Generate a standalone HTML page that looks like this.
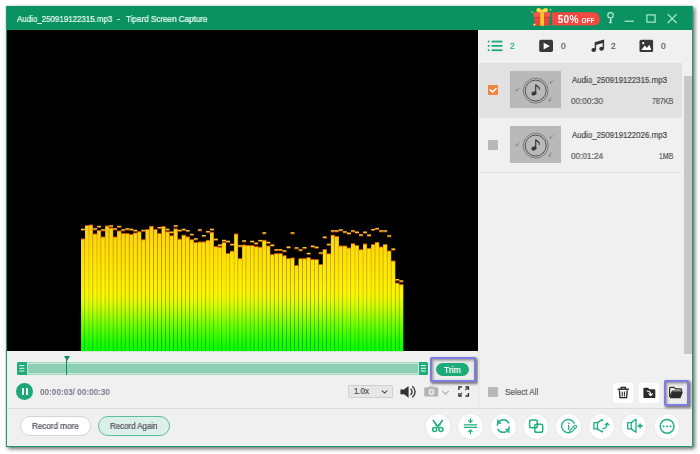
<!DOCTYPE html>
<html lang="en">
<head>
<meta charset="utf-8">
<title>Tipard Screen Capture</title>
<style>
*{box-sizing:border-box;margin:0;padding:0}
html,body{width:700px;height:454px;overflow:hidden;background:#fff}
body{font-family:"Liberation Sans",sans-serif;position:relative;color:#444}
.abs{position:absolute}
#win{position:absolute;left:6px;top:6.3px;width:687.1px;height:440.7px;background:#f0f0f0;box-shadow:2px 2px 4px rgba(0,0,0,.55), 0 0 2px rgba(0,0,0,.15)}
#winborder{position:absolute;left:6px;top:6.3px;width:687.1px;height:440.7px;border:1px solid #1a9a6e;border-right-width:1.5px;border-bottom-width:1.3px;border-top:none;pointer-events:none}
#title{position:absolute;left:6px;top:6.3px;width:687.1px;height:23.3px;background:#0a9263}
#title .t{position:absolute;left:17px;top:0;height:24px;line-height:25px;font-size:8.2px;color:#eafaf2;white-space:pre;left:10.8px}
.ls{letter-spacing:-.13px}
#video{position:absolute;left:7px;top:29.5px;width:471px;height:321.6px;background:#000}
#spec{position:absolute;left:0;top:0}
.txt{position:absolute;white-space:pre;line-height:1;transform-origin:0 0;will-change:transform;-webkit-text-stroke:.22px}
#side{position:absolute;left:478px;top:29.5px;width:214px;height:378px;background:#f0f0f0}
.row1{position:absolute;left:479px;top:62.5px;width:202.5px;height:55px;background:#e1e1e1}
.row2line{position:absolute;left:479px;top:171.5px;width:202.5px;height:1px;background:#e2e2e2}
.thumb{position:absolute;width:50.5px;height:37.2px;background:#b9b9b9}
.cb{position:absolute;width:10.2px;height:10.2px;border-radius:1px;background:#b8b8b8}
.sep{position:absolute;left:7px;top:407.6px;width:685px;height:1px;background:#dcdcdc}
.circ{position:absolute;top:413.8px;width:24.8px;height:24.8px;border-radius:50%;background:#fff;box-shadow:0 0 1.5px rgba(0,0,0,.12)}
.sq{position:absolute;top:382.6px;width:20.2px;height:20.2px;border-radius:3px;background:#fff}
.pill{position:absolute;top:416.4px;height:20px;border-radius:10px;font-size:8px;line-height:19px;text-align:center;color:#4a4a55}
.hl{position:absolute;border:2.9px solid #7c7ce2;border-radius:1.5px;box-shadow:1.2px 1.6px 2.6px rgba(0,0,0,.5), inset 1.2px 1.6px 2.6px rgba(0,0,0,.38)}
#tm{-webkit-text-stroke:0}
</style>
</head>
<body>
<div id="win"></div>

<!-- title bar -->
<div id="title">
</div>

<!-- video area -->
<div id="video"></div>
<svg id="spec" width="700" height="454" viewBox="0 0 700 454" shape-rendering="auto">
<defs>
<linearGradient id="gb" gradientUnits="userSpaceOnUse" x1="0" y1="222" x2="0" y2="351">
<stop offset="0" stop-color="#ffc81c"/><stop offset="0.12" stop-color="#ffd80e"/><stop offset="0.3" stop-color="#ffe404"/><stop offset="0.5" stop-color="#fff000"/><stop offset="0.58" stop-color="#f6f800"/><stop offset="0.67" stop-color="#c8fc00"/><stop offset="0.8" stop-color="#6cff00"/><stop offset="0.93" stop-color="#1cff00"/><stop offset="1" stop-color="#08ff00"/>
</linearGradient>
<linearGradient id="gd" gradientUnits="userSpaceOnUse" x1="0" y1="222" x2="0" y2="351">
<stop offset="0" stop-color="#a85800"/><stop offset="0.3" stop-color="#a87c00"/><stop offset="0.55" stop-color="#9c9800"/><stop offset="0.8" stop-color="#389c00"/><stop offset="1" stop-color="#069000"/>
</linearGradient>
<linearGradient id="gl" gradientUnits="userSpaceOnUse" x1="0" y1="222" x2="0" y2="351">
<stop offset="0" stop-color="#e09408"/><stop offset="0.3" stop-color="#e0b800"/><stop offset="0.55" stop-color="#d8d000"/><stop offset="0.8" stop-color="#54d400"/><stop offset="1" stop-color="#0ccc00"/>
</linearGradient>
</defs>
<rect x="81.00" y="239.0" width="4.03" height="112.1" fill="url(#gd)"/>
<rect x="85.03" y="225.5" width="4.03" height="125.6" fill="url(#gl)"/>
<rect x="89.06" y="225.0" width="4.03" height="126.1" fill="url(#gd)"/>
<rect x="93.09" y="234.0" width="4.03" height="117.1" fill="url(#gl)"/>
<rect x="97.12" y="230.6" width="4.03" height="120.5" fill="url(#gd)"/>
<rect x="101.15" y="237.0" width="4.03" height="114.1" fill="url(#gl)"/>
<rect x="105.18" y="226.0" width="4.03" height="125.1" fill="url(#gd)"/>
<rect x="109.21" y="228.0" width="4.03" height="123.1" fill="url(#gl)"/>
<rect x="113.24" y="237.0" width="4.03" height="114.1" fill="url(#gd)"/>
<rect x="117.27" y="231.0" width="4.03" height="120.1" fill="url(#gl)"/>
<rect x="121.30" y="233.5" width="4.03" height="117.6" fill="url(#gd)"/>
<rect x="125.33" y="233.5" width="4.03" height="117.6" fill="url(#gl)"/>
<rect x="129.36" y="234.6" width="4.03" height="116.5" fill="url(#gd)"/>
<rect x="133.39" y="233.0" width="4.03" height="118.1" fill="url(#gl)"/>
<rect x="137.42" y="231.8" width="4.03" height="119.3" fill="url(#gd)"/>
<rect x="141.45" y="239.8" width="4.03" height="111.3" fill="url(#gl)"/>
<rect x="145.48" y="229.5" width="4.03" height="121.6" fill="url(#gd)"/>
<rect x="149.51" y="226.3" width="4.03" height="124.8" fill="url(#gl)"/>
<rect x="153.54" y="229.5" width="4.03" height="121.6" fill="url(#gd)"/>
<rect x="157.57" y="233.5" width="4.03" height="117.6" fill="url(#gl)"/>
<rect x="161.60" y="226.6" width="4.03" height="124.5" fill="url(#gd)"/>
<rect x="165.63" y="231.8" width="4.03" height="119.3" fill="url(#gl)"/>
<rect x="169.66" y="235.8" width="4.03" height="115.3" fill="url(#gd)"/>
<rect x="173.69" y="228.9" width="4.03" height="122.2" fill="url(#gl)"/>
<rect x="177.72" y="239.2" width="4.03" height="111.9" fill="url(#gd)"/>
<rect x="181.75" y="235.2" width="4.03" height="115.9" fill="url(#gl)"/>
<rect x="185.78" y="236.9" width="4.03" height="114.2" fill="url(#gd)"/>
<rect x="189.81" y="239.8" width="4.03" height="111.3" fill="url(#gl)"/>
<rect x="193.84" y="242.6" width="4.03" height="108.5" fill="url(#gd)"/>
<rect x="197.87" y="242.0" width="4.03" height="109.1" fill="url(#gl)"/>
<rect x="201.90" y="242.0" width="4.03" height="109.1" fill="url(#gd)"/>
<rect x="205.93" y="240.3" width="4.03" height="110.8" fill="url(#gl)"/>
<rect x="209.96" y="232.3" width="4.03" height="118.8" fill="url(#gd)"/>
<rect x="213.99" y="246.7" width="4.03" height="104.4" fill="url(#gl)"/>
<rect x="218.02" y="247.2" width="4.03" height="103.9" fill="url(#gd)"/>
<rect x="222.05" y="242.6" width="4.03" height="108.5" fill="url(#gl)"/>
<rect x="226.08" y="253.5" width="4.03" height="97.6" fill="url(#gd)"/>
<rect x="230.11" y="251.2" width="4.03" height="99.9" fill="url(#gl)"/>
<rect x="234.14" y="234.0" width="4.03" height="117.1" fill="url(#gd)"/>
<rect x="238.17" y="258.7" width="4.03" height="92.4" fill="url(#gl)"/>
<rect x="242.20" y="245.0" width="4.03" height="106.1" fill="url(#gd)"/>
<rect x="246.23" y="245.5" width="4.03" height="105.6" fill="url(#gl)"/>
<rect x="250.26" y="245.5" width="4.03" height="105.6" fill="url(#gd)"/>
<rect x="254.29" y="246.7" width="4.03" height="104.4" fill="url(#gl)"/>
<rect x="258.32" y="247.2" width="4.03" height="103.9" fill="url(#gd)"/>
<rect x="262.35" y="240.3" width="4.03" height="110.8" fill="url(#gl)"/>
<rect x="266.38" y="246.0" width="4.03" height="105.1" fill="url(#gd)"/>
<rect x="270.41" y="254.7" width="4.03" height="96.4" fill="url(#gl)"/>
<rect x="274.44" y="253.5" width="4.03" height="97.6" fill="url(#gd)"/>
<rect x="278.47" y="253.5" width="4.03" height="97.6" fill="url(#gl)"/>
<rect x="282.50" y="255.8" width="4.03" height="95.3" fill="url(#gd)"/>
<rect x="286.53" y="258.7" width="4.03" height="92.4" fill="url(#gl)"/>
<rect x="290.56" y="258.0" width="4.03" height="93.1" fill="url(#gd)"/>
<rect x="294.59" y="265.6" width="4.03" height="85.5" fill="url(#gl)"/>
<rect x="298.62" y="258.7" width="4.03" height="92.4" fill="url(#gd)"/>
<rect x="302.65" y="258.7" width="4.03" height="92.4" fill="url(#gl)"/>
<rect x="306.68" y="257.5" width="4.03" height="93.6" fill="url(#gd)"/>
<rect x="310.71" y="259.6" width="4.03" height="91.5" fill="url(#gl)"/>
<rect x="314.74" y="259.6" width="4.03" height="91.5" fill="url(#gd)"/>
<rect x="318.77" y="264.6" width="4.03" height="86.5" fill="url(#gl)"/>
<rect x="322.80" y="249.5" width="4.03" height="101.6" fill="url(#gd)"/>
<rect x="326.83" y="253.8" width="4.03" height="97.3" fill="url(#gl)"/>
<rect x="330.86" y="235.2" width="4.03" height="115.9" fill="url(#gd)"/>
<rect x="334.89" y="236.6" width="4.03" height="114.5" fill="url(#gl)"/>
<rect x="338.92" y="246.0" width="4.03" height="105.1" fill="url(#gd)"/>
<rect x="342.95" y="246.0" width="4.03" height="105.1" fill="url(#gl)"/>
<rect x="346.98" y="248.0" width="4.03" height="103.1" fill="url(#gd)"/>
<rect x="351.01" y="243.8" width="4.03" height="107.3" fill="url(#gl)"/>
<rect x="355.04" y="245.5" width="4.03" height="105.6" fill="url(#gd)"/>
<rect x="359.07" y="249.8" width="4.03" height="101.3" fill="url(#gl)"/>
<rect x="363.10" y="244.0" width="4.03" height="107.1" fill="url(#gd)"/>
<rect x="367.13" y="248.4" width="4.03" height="102.7" fill="url(#gl)"/>
<rect x="371.16" y="244.5" width="4.03" height="106.6" fill="url(#gd)"/>
<rect x="375.19" y="242.4" width="4.03" height="108.7" fill="url(#gl)"/>
<rect x="379.22" y="247.0" width="4.03" height="104.1" fill="url(#gd)"/>
<rect x="383.25" y="244.5" width="4.03" height="106.6" fill="url(#gl)"/>
<rect x="387.28" y="251.0" width="4.03" height="100.1" fill="url(#gd)"/>
<rect x="391.31" y="261.0" width="4.03" height="90.1" fill="url(#gl)"/>
<rect x="395.34" y="283.1" width="4.03" height="68.0" fill="url(#gd)"/>
<rect x="399.37" y="284.7" width="4.03" height="66.4" fill="url(#gl)"/>
<rect x="81.10" y="239.0" width="3.4" height="112.1" fill="url(#gb)"/>
<rect x="81.00" y="238.5" width="3.9" height="0.9" fill="#d84a00"/>
<rect x="81.00" y="228.7" width="3.9" height="1.6" fill="#ffc62e"/>
<rect x="81.00" y="230.3" width="3.9" height="0.6" fill="#c03800"/>
<rect x="85.13" y="225.5" width="3.4" height="125.6" fill="url(#gb)"/>
<rect x="85.03" y="225.0" width="3.9" height="0.9" fill="#d84a00"/>
<rect x="89.16" y="225.0" width="3.4" height="126.1" fill="url(#gb)"/>
<rect x="89.06" y="224.5" width="3.9" height="0.9" fill="#d84a00"/>
<rect x="93.19" y="234.0" width="3.4" height="117.1" fill="url(#gb)"/>
<rect x="93.09" y="233.5" width="3.9" height="0.9" fill="#d84a00"/>
<rect x="93.09" y="228.2" width="3.9" height="1.6" fill="#ffc62e"/>
<rect x="93.09" y="229.8" width="3.9" height="0.6" fill="#c03800"/>
<rect x="97.22" y="230.6" width="3.4" height="120.5" fill="url(#gb)"/>
<rect x="97.12" y="230.1" width="3.9" height="0.9" fill="#d84a00"/>
<rect x="97.12" y="225.8" width="3.9" height="1.6" fill="#ffc62e"/>
<rect x="97.12" y="227.4" width="3.9" height="0.6" fill="#c03800"/>
<rect x="101.25" y="237.0" width="3.4" height="114.1" fill="url(#gb)"/>
<rect x="101.15" y="236.5" width="3.9" height="0.9" fill="#d84a00"/>
<rect x="101.15" y="229.2" width="3.9" height="1.6" fill="#ffc62e"/>
<rect x="101.15" y="230.8" width="3.9" height="0.6" fill="#c03800"/>
<rect x="105.28" y="226.0" width="3.4" height="125.1" fill="url(#gb)"/>
<rect x="105.18" y="225.5" width="3.9" height="0.9" fill="#d84a00"/>
<rect x="109.31" y="228.0" width="3.4" height="123.1" fill="url(#gb)"/>
<rect x="109.21" y="227.5" width="3.9" height="0.9" fill="#d84a00"/>
<rect x="109.21" y="225.2" width="3.9" height="1.6" fill="#ffc62e"/>
<rect x="109.21" y="226.8" width="3.9" height="0.6" fill="#c03800"/>
<rect x="113.34" y="237.0" width="3.4" height="114.1" fill="url(#gb)"/>
<rect x="113.24" y="236.5" width="3.9" height="0.9" fill="#d84a00"/>
<rect x="113.24" y="228.2" width="3.9" height="1.6" fill="#ffc62e"/>
<rect x="113.24" y="229.8" width="3.9" height="0.6" fill="#c03800"/>
<rect x="117.37" y="231.0" width="3.4" height="120.1" fill="url(#gb)"/>
<rect x="117.27" y="230.5" width="3.9" height="0.9" fill="#d84a00"/>
<rect x="117.27" y="225.8" width="3.9" height="1.6" fill="#ffc62e"/>
<rect x="117.27" y="227.4" width="3.9" height="0.6" fill="#c03800"/>
<rect x="121.40" y="233.5" width="3.4" height="117.6" fill="url(#gb)"/>
<rect x="121.30" y="233.0" width="3.9" height="0.9" fill="#d84a00"/>
<rect x="121.30" y="229.2" width="3.9" height="1.6" fill="#ffc62e"/>
<rect x="121.30" y="230.8" width="3.9" height="0.6" fill="#c03800"/>
<rect x="125.43" y="233.5" width="3.4" height="117.6" fill="url(#gb)"/>
<rect x="125.33" y="233.0" width="3.9" height="0.9" fill="#d84a00"/>
<rect x="125.33" y="228.2" width="3.9" height="1.6" fill="#ffc62e"/>
<rect x="125.33" y="229.8" width="3.9" height="0.6" fill="#c03800"/>
<rect x="129.46" y="234.6" width="3.4" height="116.5" fill="url(#gb)"/>
<rect x="129.36" y="234.1" width="3.9" height="0.9" fill="#d84a00"/>
<rect x="129.36" y="228.7" width="3.9" height="1.6" fill="#ffc62e"/>
<rect x="129.36" y="230.3" width="3.9" height="0.6" fill="#c03800"/>
<rect x="133.49" y="233.0" width="3.4" height="118.1" fill="url(#gb)"/>
<rect x="133.39" y="232.5" width="3.9" height="0.9" fill="#d84a00"/>
<rect x="133.39" y="229.8" width="3.9" height="1.6" fill="#ffc62e"/>
<rect x="133.39" y="231.4" width="3.9" height="0.6" fill="#c03800"/>
<rect x="137.52" y="231.8" width="3.4" height="119.3" fill="url(#gb)"/>
<rect x="137.42" y="231.3" width="3.9" height="0.9" fill="#d84a00"/>
<rect x="141.55" y="239.8" width="3.4" height="111.3" fill="url(#gb)"/>
<rect x="141.45" y="239.3" width="3.9" height="0.9" fill="#d84a00"/>
<rect x="141.45" y="229.8" width="3.9" height="1.6" fill="#ffc62e"/>
<rect x="141.45" y="231.4" width="3.9" height="0.6" fill="#c03800"/>
<rect x="145.58" y="229.5" width="3.4" height="121.6" fill="url(#gb)"/>
<rect x="145.48" y="229.0" width="3.9" height="0.9" fill="#d84a00"/>
<rect x="149.61" y="226.3" width="3.4" height="124.8" fill="url(#gb)"/>
<rect x="149.51" y="225.8" width="3.9" height="0.9" fill="#d84a00"/>
<rect x="153.64" y="229.5" width="3.4" height="121.6" fill="url(#gb)"/>
<rect x="153.54" y="229.0" width="3.9" height="0.9" fill="#d84a00"/>
<rect x="157.67" y="233.5" width="3.4" height="117.6" fill="url(#gb)"/>
<rect x="157.57" y="233.0" width="3.9" height="0.9" fill="#d84a00"/>
<rect x="157.57" y="226.9" width="3.9" height="1.6" fill="#ffc62e"/>
<rect x="157.57" y="228.5" width="3.9" height="0.6" fill="#c03800"/>
<rect x="161.70" y="226.6" width="3.4" height="124.5" fill="url(#gb)"/>
<rect x="161.60" y="226.1" width="3.9" height="0.9" fill="#d84a00"/>
<rect x="165.73" y="231.8" width="3.4" height="119.3" fill="url(#gb)"/>
<rect x="165.63" y="231.3" width="3.9" height="0.9" fill="#d84a00"/>
<rect x="165.63" y="228.7" width="3.9" height="1.6" fill="#ffc62e"/>
<rect x="165.63" y="230.3" width="3.9" height="0.6" fill="#c03800"/>
<rect x="169.76" y="235.8" width="3.4" height="115.3" fill="url(#gb)"/>
<rect x="169.66" y="235.3" width="3.9" height="0.9" fill="#d84a00"/>
<rect x="169.66" y="231.5" width="3.9" height="1.6" fill="#ffc62e"/>
<rect x="169.66" y="233.1" width="3.9" height="0.6" fill="#c03800"/>
<rect x="173.79" y="228.9" width="3.4" height="122.2" fill="url(#gb)"/>
<rect x="173.69" y="228.4" width="3.9" height="0.9" fill="#d84a00"/>
<rect x="173.69" y="225.2" width="3.9" height="1.6" fill="#ffc62e"/>
<rect x="173.69" y="226.8" width="3.9" height="0.6" fill="#c03800"/>
<rect x="177.82" y="239.2" width="3.4" height="111.9" fill="url(#gb)"/>
<rect x="177.72" y="238.7" width="3.9" height="0.9" fill="#d84a00"/>
<rect x="177.72" y="229.8" width="3.9" height="1.6" fill="#ffc62e"/>
<rect x="177.72" y="231.4" width="3.9" height="0.6" fill="#c03800"/>
<rect x="181.85" y="235.2" width="3.4" height="115.9" fill="url(#gb)"/>
<rect x="181.75" y="234.7" width="3.9" height="0.9" fill="#d84a00"/>
<rect x="181.75" y="228.7" width="3.9" height="1.6" fill="#ffc62e"/>
<rect x="181.75" y="230.3" width="3.9" height="0.6" fill="#c03800"/>
<rect x="185.88" y="236.9" width="3.4" height="114.2" fill="url(#gb)"/>
<rect x="185.78" y="236.4" width="3.9" height="0.9" fill="#d84a00"/>
<rect x="185.78" y="230.0" width="3.9" height="1.6" fill="#ffc62e"/>
<rect x="185.78" y="231.6" width="3.9" height="0.6" fill="#c03800"/>
<rect x="189.91" y="239.8" width="3.4" height="111.3" fill="url(#gb)"/>
<rect x="189.81" y="239.3" width="3.9" height="0.9" fill="#d84a00"/>
<rect x="189.81" y="233.8" width="3.9" height="1.6" fill="#ffc62e"/>
<rect x="189.81" y="235.4" width="3.9" height="0.6" fill="#c03800"/>
<rect x="193.94" y="242.6" width="3.4" height="108.5" fill="url(#gb)"/>
<rect x="193.84" y="242.1" width="3.9" height="0.9" fill="#d84a00"/>
<rect x="193.84" y="238.2" width="3.9" height="1.6" fill="#ffc62e"/>
<rect x="193.84" y="239.8" width="3.9" height="0.6" fill="#c03800"/>
<rect x="197.97" y="242.0" width="3.4" height="109.1" fill="url(#gb)"/>
<rect x="197.87" y="241.5" width="3.9" height="0.9" fill="#d84a00"/>
<rect x="197.87" y="229.2" width="3.9" height="1.6" fill="#ffc62e"/>
<rect x="197.87" y="230.8" width="3.9" height="0.6" fill="#c03800"/>
<rect x="202.00" y="242.0" width="3.4" height="109.1" fill="url(#gb)"/>
<rect x="201.90" y="241.5" width="3.9" height="0.9" fill="#d84a00"/>
<rect x="201.90" y="235.0" width="3.9" height="1.6" fill="#ffc62e"/>
<rect x="201.90" y="236.6" width="3.9" height="0.6" fill="#c03800"/>
<rect x="206.03" y="240.3" width="3.4" height="110.8" fill="url(#gb)"/>
<rect x="205.93" y="239.8" width="3.9" height="0.9" fill="#d84a00"/>
<rect x="205.93" y="231.0" width="3.9" height="1.6" fill="#ffc62e"/>
<rect x="205.93" y="232.6" width="3.9" height="0.6" fill="#c03800"/>
<rect x="210.06" y="232.3" width="3.4" height="118.8" fill="url(#gb)"/>
<rect x="209.96" y="231.8" width="3.9" height="0.9" fill="#d84a00"/>
<rect x="209.96" y="228.7" width="3.9" height="1.6" fill="#ffc62e"/>
<rect x="209.96" y="230.3" width="3.9" height="0.6" fill="#c03800"/>
<rect x="214.09" y="246.7" width="3.4" height="104.4" fill="url(#gb)"/>
<rect x="213.99" y="246.2" width="3.9" height="0.9" fill="#d84a00"/>
<rect x="213.99" y="238.7" width="3.9" height="1.6" fill="#ffc62e"/>
<rect x="213.99" y="240.3" width="3.9" height="0.6" fill="#c03800"/>
<rect x="218.12" y="247.2" width="3.4" height="103.9" fill="url(#gb)"/>
<rect x="218.02" y="246.7" width="3.9" height="0.9" fill="#d84a00"/>
<rect x="218.02" y="244.4" width="3.9" height="1.6" fill="#ffc62e"/>
<rect x="218.02" y="246.0" width="3.9" height="0.6" fill="#c03800"/>
<rect x="222.15" y="242.6" width="3.4" height="108.5" fill="url(#gb)"/>
<rect x="222.05" y="242.1" width="3.9" height="0.9" fill="#d84a00"/>
<rect x="222.05" y="239.8" width="3.9" height="1.6" fill="#ffc62e"/>
<rect x="222.05" y="241.4" width="3.9" height="0.6" fill="#c03800"/>
<rect x="226.18" y="253.5" width="3.4" height="97.6" fill="url(#gb)"/>
<rect x="226.08" y="253.0" width="3.9" height="0.9" fill="#d84a00"/>
<rect x="226.08" y="240.7" width="3.9" height="1.6" fill="#ffc62e"/>
<rect x="226.08" y="242.3" width="3.9" height="0.6" fill="#c03800"/>
<rect x="230.21" y="251.2" width="3.4" height="99.9" fill="url(#gb)"/>
<rect x="230.11" y="250.7" width="3.9" height="0.9" fill="#d84a00"/>
<rect x="230.11" y="243.8" width="3.9" height="1.6" fill="#ffc62e"/>
<rect x="230.11" y="245.4" width="3.9" height="0.6" fill="#c03800"/>
<rect x="234.24" y="234.0" width="3.4" height="117.1" fill="url(#gb)"/>
<rect x="234.14" y="233.5" width="3.9" height="0.9" fill="#d84a00"/>
<rect x="238.27" y="258.7" width="3.4" height="92.4" fill="url(#gb)"/>
<rect x="238.17" y="258.2" width="3.9" height="0.9" fill="#d84a00"/>
<rect x="238.17" y="245.2" width="3.9" height="1.6" fill="#ffc62e"/>
<rect x="238.17" y="246.8" width="3.9" height="0.6" fill="#c03800"/>
<rect x="242.30" y="245.0" width="3.4" height="106.1" fill="url(#gb)"/>
<rect x="242.20" y="244.5" width="3.9" height="0.9" fill="#d84a00"/>
<rect x="242.20" y="240.2" width="3.9" height="1.6" fill="#ffc62e"/>
<rect x="242.20" y="241.8" width="3.9" height="0.6" fill="#c03800"/>
<rect x="246.33" y="245.5" width="3.4" height="105.6" fill="url(#gb)"/>
<rect x="246.23" y="245.0" width="3.9" height="0.9" fill="#d84a00"/>
<rect x="250.36" y="245.5" width="3.4" height="105.6" fill="url(#gb)"/>
<rect x="250.26" y="245.0" width="3.9" height="0.9" fill="#d84a00"/>
<rect x="250.26" y="240.7" width="3.9" height="1.6" fill="#ffc62e"/>
<rect x="250.26" y="242.3" width="3.9" height="0.6" fill="#c03800"/>
<rect x="254.39" y="246.7" width="3.4" height="104.4" fill="url(#gb)"/>
<rect x="254.29" y="246.2" width="3.9" height="0.9" fill="#d84a00"/>
<rect x="254.29" y="242.6" width="3.9" height="1.6" fill="#ffc62e"/>
<rect x="254.29" y="244.2" width="3.9" height="0.6" fill="#c03800"/>
<rect x="258.42" y="247.2" width="3.4" height="103.9" fill="url(#gb)"/>
<rect x="258.32" y="246.7" width="3.9" height="0.9" fill="#d84a00"/>
<rect x="258.32" y="239.9" width="3.9" height="1.6" fill="#ffc62e"/>
<rect x="258.32" y="241.5" width="3.9" height="0.6" fill="#c03800"/>
<rect x="262.45" y="240.3" width="3.4" height="110.8" fill="url(#gb)"/>
<rect x="262.35" y="239.8" width="3.9" height="0.9" fill="#d84a00"/>
<rect x="262.35" y="232.2" width="3.9" height="1.6" fill="#ffc62e"/>
<rect x="262.35" y="233.8" width="3.9" height="0.6" fill="#c03800"/>
<rect x="266.48" y="246.0" width="3.4" height="105.1" fill="url(#gb)"/>
<rect x="266.38" y="245.5" width="3.9" height="0.9" fill="#d84a00"/>
<rect x="266.38" y="241.8" width="3.9" height="1.6" fill="#ffc62e"/>
<rect x="266.38" y="243.4" width="3.9" height="0.6" fill="#c03800"/>
<rect x="270.51" y="254.7" width="3.4" height="96.4" fill="url(#gb)"/>
<rect x="270.41" y="254.2" width="3.9" height="0.9" fill="#d84a00"/>
<rect x="270.41" y="244.4" width="3.9" height="1.6" fill="#ffc62e"/>
<rect x="270.41" y="246.0" width="3.9" height="0.6" fill="#c03800"/>
<rect x="274.54" y="253.5" width="3.4" height="97.6" fill="url(#gb)"/>
<rect x="274.44" y="253.0" width="3.9" height="0.9" fill="#d84a00"/>
<rect x="274.44" y="249.1" width="3.9" height="1.6" fill="#ffc62e"/>
<rect x="274.44" y="250.7" width="3.9" height="0.6" fill="#c03800"/>
<rect x="278.57" y="253.5" width="3.4" height="97.6" fill="url(#gb)"/>
<rect x="278.47" y="253.0" width="3.9" height="0.9" fill="#d84a00"/>
<rect x="278.47" y="249.1" width="3.9" height="1.6" fill="#ffc62e"/>
<rect x="278.47" y="250.7" width="3.9" height="0.6" fill="#c03800"/>
<rect x="282.60" y="255.8" width="3.4" height="95.3" fill="url(#gb)"/>
<rect x="282.50" y="255.3" width="3.9" height="0.9" fill="#d84a00"/>
<rect x="282.50" y="250.2" width="3.9" height="1.6" fill="#ffc62e"/>
<rect x="282.50" y="251.8" width="3.9" height="0.6" fill="#c03800"/>
<rect x="286.63" y="258.7" width="3.4" height="92.4" fill="url(#gb)"/>
<rect x="286.53" y="258.2" width="3.9" height="0.9" fill="#d84a00"/>
<rect x="286.53" y="246.4" width="3.9" height="1.6" fill="#ffc62e"/>
<rect x="286.53" y="248.0" width="3.9" height="0.6" fill="#c03800"/>
<rect x="290.66" y="258.0" width="3.4" height="93.1" fill="url(#gb)"/>
<rect x="290.56" y="257.5" width="3.9" height="0.9" fill="#d84a00"/>
<rect x="290.56" y="232.2" width="3.9" height="1.6" fill="#ffc62e"/>
<rect x="290.56" y="233.8" width="3.9" height="0.6" fill="#c03800"/>
<rect x="294.69" y="265.6" width="3.4" height="85.5" fill="url(#gb)"/>
<rect x="294.59" y="265.1" width="3.9" height="0.9" fill="#d84a00"/>
<rect x="294.59" y="247.2" width="3.9" height="1.6" fill="#ffc62e"/>
<rect x="294.59" y="248.8" width="3.9" height="0.6" fill="#c03800"/>
<rect x="298.72" y="258.7" width="3.4" height="92.4" fill="url(#gb)"/>
<rect x="298.62" y="258.2" width="3.9" height="0.9" fill="#d84a00"/>
<rect x="298.62" y="249.2" width="3.9" height="1.6" fill="#ffc62e"/>
<rect x="298.62" y="250.8" width="3.9" height="0.6" fill="#c03800"/>
<rect x="302.75" y="258.7" width="3.4" height="92.4" fill="url(#gb)"/>
<rect x="302.65" y="258.2" width="3.9" height="0.9" fill="#d84a00"/>
<rect x="302.65" y="247.0" width="3.9" height="1.6" fill="#ffc62e"/>
<rect x="302.65" y="248.6" width="3.9" height="0.6" fill="#c03800"/>
<rect x="306.78" y="257.5" width="3.4" height="93.6" fill="url(#gb)"/>
<rect x="306.68" y="257.0" width="3.9" height="0.9" fill="#d84a00"/>
<rect x="306.68" y="252.7" width="3.9" height="1.6" fill="#ffc62e"/>
<rect x="306.68" y="254.3" width="3.9" height="0.6" fill="#c03800"/>
<rect x="310.81" y="259.6" width="3.4" height="91.5" fill="url(#gb)"/>
<rect x="310.71" y="259.1" width="3.9" height="0.9" fill="#d84a00"/>
<rect x="310.71" y="245.5" width="3.9" height="1.6" fill="#ffc62e"/>
<rect x="310.71" y="247.1" width="3.9" height="0.6" fill="#c03800"/>
<rect x="314.84" y="259.6" width="3.4" height="91.5" fill="url(#gb)"/>
<rect x="314.74" y="259.1" width="3.9" height="0.9" fill="#d84a00"/>
<rect x="314.74" y="246.6" width="3.9" height="1.6" fill="#ffc62e"/>
<rect x="314.74" y="248.2" width="3.9" height="0.6" fill="#c03800"/>
<rect x="318.87" y="264.6" width="3.4" height="86.5" fill="url(#gb)"/>
<rect x="318.77" y="264.1" width="3.9" height="0.9" fill="#d84a00"/>
<rect x="318.77" y="252.2" width="3.9" height="1.6" fill="#ffc62e"/>
<rect x="318.77" y="253.8" width="3.9" height="0.6" fill="#c03800"/>
<rect x="322.90" y="249.5" width="3.4" height="101.6" fill="url(#gb)"/>
<rect x="322.80" y="249.0" width="3.9" height="0.9" fill="#d84a00"/>
<rect x="322.80" y="236.5" width="3.9" height="1.6" fill="#ffc62e"/>
<rect x="322.80" y="238.1" width="3.9" height="0.6" fill="#c03800"/>
<rect x="326.93" y="253.8" width="3.4" height="97.3" fill="url(#gb)"/>
<rect x="326.83" y="253.3" width="3.9" height="0.9" fill="#d84a00"/>
<rect x="326.83" y="243.7" width="3.9" height="1.6" fill="#ffc62e"/>
<rect x="326.83" y="245.3" width="3.9" height="0.6" fill="#c03800"/>
<rect x="330.96" y="235.2" width="3.4" height="115.9" fill="url(#gb)"/>
<rect x="330.86" y="234.7" width="3.9" height="0.9" fill="#d84a00"/>
<rect x="330.86" y="230.2" width="3.9" height="1.6" fill="#ffc62e"/>
<rect x="330.86" y="231.8" width="3.9" height="0.6" fill="#c03800"/>
<rect x="334.99" y="236.6" width="3.4" height="114.5" fill="url(#gb)"/>
<rect x="334.89" y="236.1" width="3.9" height="0.9" fill="#d84a00"/>
<rect x="334.89" y="230.2" width="3.9" height="1.6" fill="#ffc62e"/>
<rect x="334.89" y="231.8" width="3.9" height="0.6" fill="#c03800"/>
<rect x="339.02" y="246.0" width="3.4" height="105.1" fill="url(#gb)"/>
<rect x="338.92" y="245.5" width="3.9" height="0.9" fill="#d84a00"/>
<rect x="338.92" y="229.2" width="3.9" height="1.6" fill="#ffc62e"/>
<rect x="338.92" y="230.8" width="3.9" height="0.6" fill="#c03800"/>
<rect x="343.05" y="246.0" width="3.4" height="105.1" fill="url(#gb)"/>
<rect x="342.95" y="245.5" width="3.9" height="0.9" fill="#d84a00"/>
<rect x="342.95" y="231.2" width="3.9" height="1.6" fill="#ffc62e"/>
<rect x="342.95" y="232.8" width="3.9" height="0.6" fill="#c03800"/>
<rect x="347.08" y="248.0" width="3.4" height="103.1" fill="url(#gb)"/>
<rect x="346.98" y="247.5" width="3.9" height="0.9" fill="#d84a00"/>
<rect x="346.98" y="232.5" width="3.9" height="1.6" fill="#ffc62e"/>
<rect x="346.98" y="234.1" width="3.9" height="0.6" fill="#c03800"/>
<rect x="351.11" y="243.8" width="3.4" height="107.3" fill="url(#gb)"/>
<rect x="351.01" y="243.3" width="3.9" height="0.9" fill="#d84a00"/>
<rect x="351.01" y="230.2" width="3.9" height="1.6" fill="#ffc62e"/>
<rect x="351.01" y="231.8" width="3.9" height="0.6" fill="#c03800"/>
<rect x="355.14" y="245.5" width="3.4" height="105.6" fill="url(#gb)"/>
<rect x="355.04" y="245.0" width="3.9" height="0.9" fill="#d84a00"/>
<rect x="355.04" y="231.5" width="3.9" height="1.6" fill="#ffc62e"/>
<rect x="355.04" y="233.1" width="3.9" height="0.6" fill="#c03800"/>
<rect x="359.17" y="249.8" width="3.4" height="101.3" fill="url(#gb)"/>
<rect x="359.07" y="249.3" width="3.9" height="0.9" fill="#d84a00"/>
<rect x="359.07" y="234.2" width="3.9" height="1.6" fill="#ffc62e"/>
<rect x="359.07" y="235.8" width="3.9" height="0.6" fill="#c03800"/>
<rect x="363.20" y="244.0" width="3.4" height="107.1" fill="url(#gb)"/>
<rect x="363.10" y="243.5" width="3.9" height="0.9" fill="#d84a00"/>
<rect x="363.10" y="231.5" width="3.9" height="1.6" fill="#ffc62e"/>
<rect x="363.10" y="233.1" width="3.9" height="0.6" fill="#c03800"/>
<rect x="367.23" y="248.4" width="3.4" height="102.7" fill="url(#gb)"/>
<rect x="367.13" y="247.9" width="3.9" height="0.9" fill="#d84a00"/>
<rect x="367.13" y="234.4" width="3.9" height="1.6" fill="#ffc62e"/>
<rect x="367.13" y="236.0" width="3.9" height="0.6" fill="#c03800"/>
<rect x="371.26" y="244.5" width="3.4" height="106.6" fill="url(#gb)"/>
<rect x="371.16" y="244.0" width="3.9" height="0.9" fill="#d84a00"/>
<rect x="371.16" y="228.9" width="3.9" height="1.6" fill="#ffc62e"/>
<rect x="371.16" y="230.5" width="3.9" height="0.6" fill="#c03800"/>
<rect x="375.29" y="242.4" width="3.4" height="108.7" fill="url(#gb)"/>
<rect x="375.19" y="241.9" width="3.9" height="0.9" fill="#d84a00"/>
<rect x="375.19" y="227.9" width="3.9" height="1.6" fill="#ffc62e"/>
<rect x="375.19" y="229.5" width="3.9" height="0.6" fill="#c03800"/>
<rect x="379.32" y="247.0" width="3.4" height="104.1" fill="url(#gb)"/>
<rect x="379.22" y="246.5" width="3.9" height="0.9" fill="#d84a00"/>
<rect x="379.22" y="230.2" width="3.9" height="1.6" fill="#ffc62e"/>
<rect x="379.22" y="231.8" width="3.9" height="0.6" fill="#c03800"/>
<rect x="383.35" y="244.5" width="3.4" height="106.6" fill="url(#gb)"/>
<rect x="383.25" y="244.0" width="3.9" height="0.9" fill="#d84a00"/>
<rect x="383.25" y="230.2" width="3.9" height="1.6" fill="#ffc62e"/>
<rect x="383.25" y="231.8" width="3.9" height="0.6" fill="#c03800"/>
<rect x="387.38" y="251.0" width="3.4" height="100.1" fill="url(#gb)"/>
<rect x="387.28" y="250.5" width="3.9" height="0.9" fill="#d84a00"/>
<rect x="387.28" y="235.2" width="3.9" height="1.6" fill="#ffc62e"/>
<rect x="387.28" y="236.8" width="3.9" height="0.6" fill="#c03800"/>
<rect x="391.41" y="261.0" width="3.4" height="90.1" fill="url(#gb)"/>
<rect x="391.31" y="260.5" width="3.9" height="0.9" fill="#d84a00"/>
<rect x="391.31" y="248.4" width="3.9" height="1.6" fill="#ffc62e"/>
<rect x="391.31" y="250.0" width="3.9" height="0.6" fill="#c03800"/>
<rect x="395.44" y="283.1" width="3.4" height="68.0" fill="url(#gb)"/>
<rect x="395.34" y="282.6" width="3.9" height="0.9" fill="#d84a00"/>
<rect x="395.34" y="279.0" width="3.9" height="1.6" fill="#ffc62e"/>
<rect x="395.34" y="280.6" width="3.9" height="0.6" fill="#c03800"/>
<rect x="399.47" y="284.7" width="3.4" height="66.4" fill="url(#gb)"/>
<rect x="399.37" y="284.2" width="3.9" height="0.9" fill="#d84a00"/>
<rect x="399.37" y="280.3" width="3.9" height="1.6" fill="#ffc62e"/>
<rect x="399.37" y="281.9" width="3.9" height="0.6" fill="#c03800"/>
</svg>

<!-- side panel -->
<div id="side"></div>
<div class="row1"></div>
<div class="row2line"></div>
<div class="thumb" style="left:510.3px;top:71.2px"></div>
<div class="thumb" style="left:510.3px;top:126.2px"></div>
<div class="cb" style="left:488px;top:85.1px;background:#f0843c"></div>
<div class="cb" style="left:488.2px;top:139.6px"></div>
<div class="cb" style="left:488.3px;top:387.2px"></div>
<div class="abs" style="left:683.5px;top:76px;width:8.1px;height:278.3px;background:#c8c8c8"></div>



<!-- controls -->
<div class="abs" style="left:17px;top:361.9px;width:411px;height:13.1px;background:#a2d9c5;border-radius:1.5px"></div>
<div class="abs" style="left:26.9px;top:363px;width:391.8px;height:10.8px;background:#8ccfb4;border:.6px solid #c6e9dc"></div>
<div class="abs" style="left:16.9px;top:361.9px;width:10px;height:13.1px;background:#1fab7a;border-radius:1.5px 0 0 1.5px"></div>
<div class="abs" style="left:418.7px;top:361.9px;width:9.4px;height:13.1px;background:#1fab7a;border-radius:0 1.5px 1.5px 0"></div>
<div class="abs" style="left:66.1px;top:358px;width:1px;height:17px;background:#14885f"></div>
<div class="abs" style="left:63.6px;top:355.8px;width:0;height:0;border-left:3px solid transparent;border-right:3px solid transparent;border-top:5px solid #14885f"></div>

<div class="abs" style="left:16.3px;top:383px;width:16.9px;height:16.9px;border-radius:50%;background:#1aa877"></div>
<div class="abs" style="left:21.8px;top:388.3px;width:1.8px;height:6.5px;background:#fff;border-radius:.5px"></div>
<div class="abs" style="left:26.1px;top:388.3px;width:1.8px;height:6.5px;background:#fff;border-radius:.5px"></div>

<div class="hl" style="left:429.8px;top:356.9px;width:46.5px;height:25.3px;background:#ececec"></div>
<div class="abs" style="left:435.6px;top:362.8px;width:33.2px;height:12.9px;border-radius:7px;background:#1dab79"></div>

<div class="abs" style="left:348px;top:384.6px;width:44.5px;height:13.4px;background:#e6e6e6;border:1px solid #cfcfcf;border-radius:1.5px"></div>

<div class="sep"></div>
<div class="abs" style="left:478.2px;top:351.1px;width:1px;height:56.5px;background:#e5e5e5"></div>
<div class="pill" style="left:19.7px;width:71px;background:#fff;border:1px solid #d4d4d4"></div>
<div class="pill" style="left:98.4px;width:71.3px;background:#dcefe8;border:1px solid #5cbf9b"></div>

<div class="circ" style="left:425.6px"></div>
<div class="circ" style="left:458.3px"></div>
<div class="circ" style="left:491px"></div>
<div class="circ" style="left:523.6px"></div>
<div class="circ" style="left:556.3px"></div>
<div class="circ" style="left:589px"></div>
<div class="circ" style="left:621.6px"></div>
<div class="circ" style="left:654.6px"></div>

<div class="sq" style="left:612.8px"></div>
<div class="sq" style="left:639.3px"></div>
<div class="hl" style="left:664.1px;top:380.1px;width:25px;height:26px;background:#ececec"></div>

<div class="txt" id="t1" style="left:16.6px;top:14.82px;font-size:8.6px;color:#eafaf2;transform:scaleX(0.9236)">Audio_250919122315.mp3</div>
<div class="txt" id="t2" style="left:117.4px;top:14.82px;font-size:8.6px;color:#eafaf2;transform:scaleX(0.9777)">-</div>
<div class="txt" id="t3" style="left:125.5px;top:14.82px;font-size:8.6px;color:#eafaf2;transform:scaleX(0.9414)">Tipard Screen Capture</div>
<div class="txt" id="n1" style="left:571.6px;top:76.12px;font-size:8.6px;color:#484848;transform:scaleX(0.9207)">Audio_250919122315.mp3</div>
<div class="txt" id="d1" style="left:571.2px;top:96.62px;font-size:8.6px;color:#5a5a5a;transform:scaleX(0.9559)">00:00:30</div>
<div class="txt" id="s1" style="left:651.7px;top:96.62px;font-size:8.6px;color:#5a5a5a;transform:scaleX(0.8288)">787KB</div>
<div class="txt" id="n2" style="left:571.6px;top:130.92px;font-size:8.6px;color:#484848;transform:scaleX(0.9207)">Audio_250919122026.mp3</div>
<div class="txt" id="d2" style="left:571.2px;top:151.52px;font-size:8.6px;color:#5a5a5a;transform:scaleX(0.9559)">00:01:24</div>
<div class="txt" id="s2" style="left:659.1px;top:151.52px;font-size:8.6px;color:#5a5a5a;transform:scaleX(0.8087)">1MB</div>
<div class="txt" id="sa" style="left:504.6px;top:388.42px;font-size:8.6px;color:#5a5a5a;transform:scaleX(0.9442)">Select All</div>
<div class="txt" id="tm" style="left:39.7px;top:389.06px;font-size:8.2px;color:#7a7a8a;font-weight:bold;transform:scaleX(0.9957)">00:00:03/ 00:00:30</div>
<div class="txt" id="trim" style="left:443.9px;top:365.92px;font-size:8.6px;color:#ffffff;transform:scaleX(0.9838)">Trim</div>
<div class="txt" id="spd" style="left:354.1px;top:387.42px;font-size:8.6px;color:#444;transform:scaleX(0.9166)">1.0x</div>
<div class="txt" id="rm" style="left:31.8px;top:422.22px;font-size:8.6px;color:#50505a;transform:scaleX(0.9395)">Record more</div>
<div class="txt" id="ra" style="left:110.0px;top:422.22px;font-size:8.6px;color:#50505a;transform:scaleX(0.9199)">Record Again</div>
<div class="txt" id="c1" style="left:509.9px;top:42.29px;font-size:8.4px;color:#27ad80;transform:scaleX(1.0061)">2</div>
<div class="txt" id="c2" style="left:560.9px;top:42.29px;font-size:8.4px;color:#58586e;transform:scaleX(1.0061)">0</div>
<div class="txt" id="c3" style="left:611.4px;top:42.29px;font-size:8.4px;color:#58586e;transform:scaleX(1.0061)">2</div>
<div class="txt" id="c4" style="left:661.1px;top:42.29px;font-size:8.4px;color:#58586e;transform:scaleX(1.0061)">0</div>
<!-- icons overlay -->
<svg class="abs" style="left:0;top:0" width="700" height="454" viewBox="0 0 700 454">
<!-- title bar: gift -->
<g>
  <ellipse cx="539.2" cy="10.4" rx="3" ry="2.2" fill="#ffd83e" transform="rotate(25 539.2 10.4)"/>
  <ellipse cx="545" cy="10.4" rx="3" ry="2.2" fill="#ffd83e" transform="rotate(-25 545 10.4)"/>
  <rect x="533.2" y="12.2" width="17.1" height="4.7" rx=".6" fill="#f4564b"/>
  <rect x="534.3" y="16.9" width="14.9" height="8.8" fill="#e9463d"/>
  <rect x="534.3" y="16.9" width="14.9" height="1" fill="#c93a34"/>
  <rect x="540.3" y="12.2" width="3.7" height="13.5" fill="#ffc928"/>
  <circle cx="532" cy="12" r=".7" fill="#ffe36a"/><circle cx="550.4" cy="9.6" r=".8" fill="#ffe36a"/>
  <path d="M534.4 23 L534.9 24.3 L536.2 24.8 L534.9 25.3 L534.4 26.6 L533.9 25.3 L532.6 24.8 L533.9 24.3 Z" fill="#ffe36a"/>
</g>
<!-- 50% off badge -->
<path d="M552 12.2 H593.3 A6.7 6.7 0 0 1 593.3 25.6 H552 Z" fill="#f2483f"/>
<text x="557.7" y="22.5" font-family="Liberation Sans, sans-serif" font-weight="bold" font-size="10.1" fill="#fff" letter-spacing=".25">50%</text>
<text x="581.6" y="22.8" font-family="Liberation Sans, sans-serif" font-weight="bold" font-size="6.4" fill="#fff">OFF</text>
<!-- key -->
<g fill="none" stroke="#b6f0d6" stroke-width="1.15">
  <circle cx="610.5" cy="15.3" r="2.7"/>
  <path d="M610.5 18 V23.4 M608.8 22.5 H611.9 M610.5 20.4 H611.8"/>
</g>
<!-- minimize, maximize, close -->
<g fill="none" stroke="#aeeccf" stroke-width="1.2">
  <path d="M624.7 21.2 H634"/>
  <rect x="646.9" y="14.9" width="8.2" height="7.2"/>
  <path d="M667.7 14.1 L676.7 23 M676.7 14.1 L667.7 23" stroke-width="1.15"/>
</g>

<!-- tab icons -->
<g fill="#14a674">
  <rect x="487.8" y="40.7" width="1.7" height="1.7"/><rect x="491.6" y="40.7" width="10.8" height="1.7"/>
  <rect x="487.8" y="45" width="1.7" height="1.7"/><rect x="491.6" y="45" width="10.8" height="1.7"/>
  <rect x="487.8" y="49.4" width="1.7" height="1.7"/><rect x="491.6" y="49.4" width="10.8" height="1.7"/>
</g>
<rect x="539.2" y="39.8" width="13.8" height="12.3" rx="1.8" fill="#383838"/>
<path d="M543.6 42.7 L549.9 46 L543.6 49.5 Z" fill="#fff"/>
<g fill="#333">
  <ellipse cx="593.7" cy="50" rx="2.3" ry="2"/><ellipse cx="601.5" cy="48.7" rx="2.3" ry="2"/>
  <path d="M594.7 42.2 L604.1 39.4 V48.7 H602.7 V43.1 L596.1 45 V50 H594.7 Z"/>
</g>
<rect x="639.5" y="39.8" width="13.6" height="12.3" rx="1.6" fill="#383838"/>
<path d="M641.4 50.1 L644.8 45.6 L646.9 47.9 L649.2 44.8 L651.4 50.1 Z" fill="#fff"/>
<circle cx="643.2" cy="43.2" r="1.1" fill="#fff"/>

<!-- checkbox tick -->
<path d="M490.3 89.9 L492.6 92.1 L496.1 88.5" fill="none" stroke="#fff" stroke-width="1.5" stroke-linecap="round" stroke-linejoin="round"/>

<!-- thumbnail icons -->
<g>
  <circle cx="535.7" cy="90.6" r="12.5" fill="none" stroke="#4a4a4a" stroke-width=".55"/>
  <circle cx="535.7" cy="90.6" r="10.5" fill="none" stroke="#444" stroke-width=".9"/>
  <ellipse cx="533.9" cy="93.4" rx="2.6" ry="2.1" fill="#3a3a3a" transform="rotate(-20 533.9 93.4)"/>
  <path d="M535.7 93.4 V84.4 C536.6 86.2 539.6 86.6 539.4 89.4" fill="none" stroke="#3a3a3a" stroke-width="1.2" stroke-linecap="round"/>
  <g stroke="#8c8c8c" stroke-width=".8" fill="#8c8c8c">
    <circle cx="516.6" cy="90.2" r=".8"/><path d="M517.3 90.2 L519.6 87.6" fill="none"/>
    <circle cx="550.6" cy="82.6" r=".8"/><path d="M551.3 82.4 L553.8 79.8" fill="none"/>
    <circle cx="549.6" cy="100.6" r=".8"/><path d="M550.3 100.4 L550.9 97" fill="none"/>
  </g>
</g>
<g transform="translate(0 55)">
  <circle cx="535.7" cy="90.6" r="12.5" fill="none" stroke="#4a4a4a" stroke-width=".55"/>
  <circle cx="535.7" cy="90.6" r="10.5" fill="none" stroke="#444" stroke-width=".9"/>
  <ellipse cx="533.9" cy="93.4" rx="2.6" ry="2.1" fill="#3a3a3a" transform="rotate(-20 533.9 93.4)"/>
  <path d="M535.7 93.4 V84.4 C536.6 86.2 539.6 86.6 539.4 89.4" fill="none" stroke="#3a3a3a" stroke-width="1.2" stroke-linecap="round"/>
  <g stroke="#8c8c8c" stroke-width=".8" fill="#8c8c8c">
    <circle cx="516.6" cy="90.2" r=".8"/><path d="M517.3 90.2 L519.6 87.6" fill="none"/>
    <circle cx="550.6" cy="82.6" r=".8"/><path d="M551.3 82.4 L553.8 79.8" fill="none"/>
    <circle cx="549.6" cy="100.6" r=".8"/><path d="M550.3 100.4 L550.9 97" fill="none"/>
  </g>
</g>

<!-- timeline handle grips -->
<g stroke="#e8fff5" stroke-width="1">
  <path d="M19.4 365.6 H24.4 M19.4 368.3 H24.4 M19.4 371 H24.4"/>
  <path d="M420.8 365.6 H425.8 M420.8 368.3 H425.8 M420.8 371 H425.8"/>
</g>
<!-- speed chevron -->
<path d="M382 390.6 L384.6 393.1 L387.2 390.6" fill="none" stroke="#444" stroke-width="1.1"/>
<!-- speaker -->
<g>
  <path d="M400.4 389.4 H404 L408.6 386 V397.7 L404 394.3 H400.4 Z" fill="#333"/>
  <path d="M410.6 388.7 A4.2 4.2 0 0 1 410.6 395" fill="none" stroke="#333" stroke-width="1.4"/>
  <path d="M412.3 386.3 A7 7 0 0 1 412.3 397.4" fill="none" stroke="#333" stroke-width="1.4"/>
</g>
<!-- camera -->
<g>
  <path d="M428.4 387.3 L429.3 386.2 H433.7 L434.6 387.3 Z" fill="#b4b4b4"/>
  <rect x="424.2" y="387.3" width="14.1" height="9.2" rx="1" fill="#b4b4b4"/>
  <circle cx="431.4" cy="392" r="2.9" fill="#f0f0f0"/>
  <circle cx="431.4" cy="392" r="1.4" fill="#b4b4b4"/>
</g>
<path d="M442.2 390.9 L445.5 394.2 L448.8 390.9" fill="none" stroke="#b0b0b0" stroke-width="1.2"/>
<!-- fullscreen -->
<g fill="none" stroke="#333" stroke-width="1.4">
  <path d="M458.9 390 V387 H461.9"/>
  <path d="M465.4 387 H468.4 V390"/>
  <path d="M468.4 393 V396 H465.4"/>
  <path d="M461.9 396 H458.9 V393"/>
  <path d="M468 387.4 L465.2 390.2 M459.3 395.6 L462.1 392.8" stroke-width="1.2"/>
</g>

<!-- trash -->
<g fill="none" stroke="#222" stroke-width="1.3">
  <path d="M617.6 389.2 H628.9" stroke-width="1.4"/>
  <path d="M621.2 389 V387.3 H625.4 V389"/>
  <path d="M619.4 390.4 L620 397.6 H626.6 L627.2 390.4"/>
  <path d="M622.2 391.6 V396.4 M624.4 391.6 V396.4" stroke-width="1"/>
</g>
<!-- folder export -->
<g>
  <path d="M643.4 388.6 Q643.4 387.7 644.3 387.7 H648 L649.4 389.2 H654.4 Q655.3 389.2 655.3 390.1 V397.2 Q655.3 398.1 654.4 398.1 H644.3 Q643.4 398.1 643.4 397.2 Z" fill="#2a2a2a"/>
  <path d="M646.6 391 Q650.4 390.6 650.6 394.6 M648.6 393.4 L650.7 395.6 L652.8 393.4" fill="none" stroke="#fff" stroke-width="1.1"/>
</g>
<!-- folder open -->
<g>
  <path d="M669.6 388.4 Q669.6 387.4 670.6 387.4 H674 L675.4 388.9 H680.6 Q681.6 388.9 681.6 389.9 V391 H672.4 L669.6 397 Z" fill="none" stroke="#2a2a2a" stroke-width="1.1"/>
  <path d="M672.6 391.4 H683 L680.8 397.6 Q680.6 398.2 680 398.2 H670.4 Q669.8 398.2 670 397.6 Z" fill="#2a2a2a"/>
</g>

<!-- bottom toolbar icons (green) -->
<g fill="none" stroke="#1fae7e" stroke-width="1.5" stroke-linecap="round" stroke-linejoin="round">
  <!-- scissors -->
  <circle cx="434.7" cy="429.5" r="2.05"/><circle cx="440.9" cy="429.5" r="2.05"/>
  <path d="M433.2 420.4 L438.6 427.4 M442.4 420.4 L437 427.4" stroke-width="1.5"/>
  <path d="M433.2 420.4 L436 426 L437.6 426.4 Z M442.4 420.4 L439.6 426 L438 426.4 Z" fill="#1fae7e" stroke-width=".6"/>
  <!-- compress -->
  <path d="M463.9 424.8 H477 M463.9 427.3 H477" stroke-width="1.3" stroke-linecap="butt"/>
  <path d="M470.4 418.6 V422.2 M468.6 420.6 L470.4 422.4 L472.2 420.6 M470.4 433.6 V430 M468.6 431.6 L470.4 429.8 L472.2 431.6" stroke-width="1.2"/>
  <!-- refresh -->
  <path d="M497.3 425.2 A6.1 6.1 0 0 1 508.6 422.9" stroke-width="1.5"/>
  <path d="M509.3 427 A6.1 6.1 0 0 1 498 429.3" stroke-width="1.5"/>
  <path d="M497.9 420 V423 H500.8 M508.8 432.4 V429.4 H505.9" stroke-width="1.4"/>
  <!-- copy -->
  <rect x="529.6" y="420.1" width="7.7" height="7.7" rx="1.9"/>
  <rect x="534.7" y="424.3" width="8" height="8" rx="1.9"/>
  <!-- info edit -->
  <path d="M574.2 423.2 A6.6 6.6 0 1 0 569.4 432.6" stroke-width="1.4"/>
  <path d="M568.6 425.5 V429.2" stroke-width="1.3"/><circle cx="568.6" cy="423.5" r=".45" fill="#1fae7e" stroke-width=".7"/>
  <path d="M569.6 432.4 L570 430.2 L574.6 425.6 Q575.4 424.9 576.2 425.7 Q577 426.5 576.3 427.3 L571.7 431.9 Z" stroke-width="1.1"/>
  <path d="M573.5 426.8 L575.2 428.5" stroke-width=".9"/>
  <!-- speaker rotate -->
  <path d="M597.4 422.6 H593.9 V428.9 H597.4 Z" stroke-width="1.3"/>
  <path d="M597.4 422.6 L602 419.6 L602.7 420.6 M597.4 428.9 L602 431.9 L602.7 430.9" stroke-width="1.3"/>
  <path d="M603 428.4 Q607 428.8 607 423.6 M605.3 424.9 L607 423 L608.8 424.9" stroke-width="1.3"/>
  <!-- speaker plus -->
  <path d="M631.2 422.6 H627.7 V428.9 H631.2 Z" stroke-width="1.3"/>
  <path d="M631.2 422.6 L636 419.3 V432.3 L631.2 428.9" stroke-width="1.3"/>
  <path d="M638.2 425.9 H642 M640.1 424 V427.8" stroke-width="1.6"/>
  <!-- more -->
  <circle cx="667.1" cy="426.3" r="6.9" stroke-width="1.5"/>
</g>
<g fill="#1fae7e"><circle cx="663.6" cy="426.3" r="1"/><circle cx="667.1" cy="426.3" r="1"/><circle cx="670.6" cy="426.3" r="1"/></g>

</svg>

<div id="winborder"></div>
</body>
</html>
